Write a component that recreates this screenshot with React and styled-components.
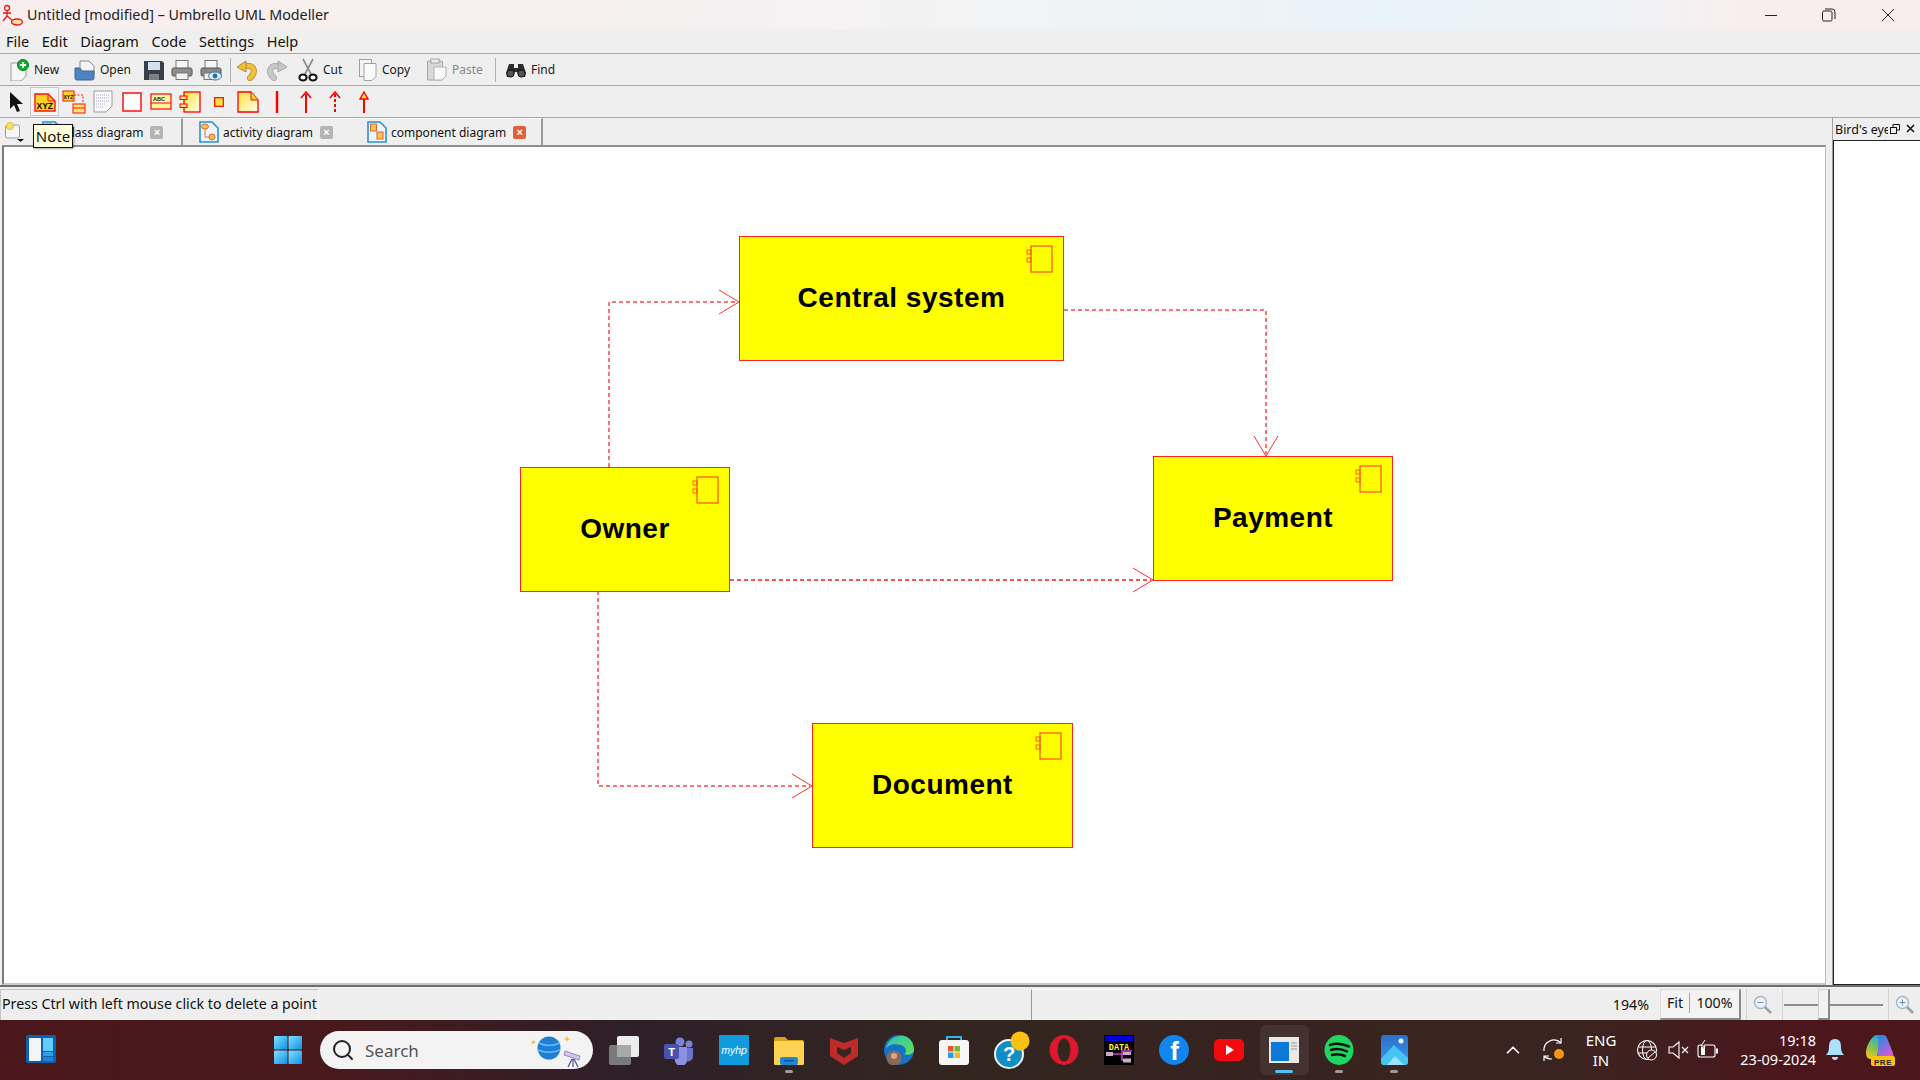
import React from "react";
import styled, { createGlobalStyle } from "styled-components";
import { Search, ChevronUp } from "lucide-react";

const Global = createGlobalStyle`
  html, body { margin: 0; padding: 0; width: 1920px; height: 1080px; overflow: hidden; }
  body { font-family: "Noto Sans", "Open Sans", sans-serif; color: #111; }
  * { box-sizing: border-box; }
`;

const Screen = styled.div`
  width: 1920px;
  height: 1080px;
  display: flex;
  flex-direction: column;
`;

const Win = styled.div`
  height: 1020px;
  display: flex;
  flex-direction: column;
  background: #efefef;
`;

const TitleBar = styled.div`
  height: 29px;
  display: flex;
  align-items: center;
  padding-left: 2px;
  background: linear-gradient(90deg, #f9eeee 0%, #f8f0f0 25%, #f3f3f4 50%, #e9f3fa 72%, #edf3f7 83%, #f9eeef 91%, #f9eeee 100%);
  font-size: 14.3px;
  color: #222;
`;

const TitleText = styled.span`
  margin-left: 3px;
  margin-top: -1px;
`;

const WinControls = styled.div`
  margin-left: auto;
  padding-right: 3px;
  display: flex;
`;

const WinButton = styled.div`
  width: 58.5px;
  height: 29px;
  display: flex;
  align-items: center;
  justify-content: center;
`;

const MenuBar = styled.div`
  height: 25px;
  display: flex;
  align-items: center;
  gap: 12.5px;
  padding-left: 6px;
  font-size: 14.5px;
  border-bottom: 1px solid #a8a8a8;
`;

const ToolRow = styled.div`
  height: 32px;
  display: flex;
  align-items: center;
  padding-left: ${(p) => p.$pad}px;
  border-bottom: 1px solid #a8a8a8;
`;

const ToolButton = styled.div`
  width: ${(p) => p.$w}px;
  display: flex;
  align-items: center;
  gap: ${(p) => p.$gap || 4}px;
  font-size: 12px;
  color: ${(p) => (p.$off ? "#8a8a8a" : "#1a1a1a")};
`;

const ToolSep = styled.div`
  width: ${(p) => p.$w}px;
  height: 24px;
  border-left: 1px solid #b0b0b0;
`;

const PaletteCell = styled.div`
  width: 29px;
  height: 29px;
  display: flex;
  align-items: center;
  justify-content: center;
  ${(p) => p.$on && "border: 1px solid #c9c9c9; background: #f4f4f4;"}
`;

const TabStrip = styled.div`
  position: relative;
  height: 27px;
  display: flex;
  align-items: center;
  padding-left: 5px;
  width: 1826px;
`;

const NewTab = styled.div`
  width: 25px;
  display: flex;
`;

const Tab = styled.div`
  width: ${(p) => p.$w}px;
  height: 27px;
  display: flex;
  align-items: center;
  padding-left: ${(p) => p.$pad}px;
  gap: 4px;
  font-size: 12px;
  border-right: ${(p) => (p.$line ? "2px solid #9a9a9a" : "none")};
  border-top: 1px solid #fbfbfb;
`;

const TabClose = styled.span`
  width: 13px;
  height: 13px;
  margin-left: 3px;
  border-radius: 2px;
  background: ${(p) => (p.$on ? "#e0603c" : "#b4b4b4")};
  color: #fff;
  font-size: 11px;
  line-height: 13px;
  font-weight: 700;
  text-align: center;
  font-family: "Liberation Sans", sans-serif;
`;

const Tooltip = styled.div`
  position: absolute;
  left: 33px;
  top: 6px;
  width: 40px;
  height: 24px;
  background: #ffffdc;
  border: 1px solid #111;
  box-shadow: 1px 1px 2px rgba(0, 0, 0, 0.35);
  font-size: 15px;
  line-height: 22px;
  text-align: center;
  z-index: 3;
`;

const Workspace = styled.div`
  flex: 1;
  display: flex;
  min-height: 0;
`;

const Canvas = styled.div`
  position: relative;
  margin-left: 2px;
  width: 1824px;
  background: #fff;
  border-top: 2px solid #8e8e8e;
  border-left: 2px solid #7a7a7a;
  border-right: 1px solid #c0c0c0;
  border-bottom: 2px solid #c8c8c8;
`;

const Wires = styled.svg`
  position: absolute;
  left: -4px;
  top: -147px;
  width: 1920px;
  height: 1080px;
  pointer-events: none;
`;

const Node = styled.div`
  position: absolute;
  left: ${(p) => p.$x - 4}px;
  top: ${(p) => p.$y - 147}px;
  width: ${(p) => p.$w}px;
  height: ${(p) => p.$h}px;
  padding-bottom: 2px;
  background: #ffff00;
  border: 1px solid #ff2222;
  display: flex;
  align-items: center;
  justify-content: center;
  font-family: "Liberation Sans", Arial, sans-serif;
  font-weight: 700;
  font-size: 28px;
  letter-spacing: 0.5px;
  color: #000;
`;

const NodeGlyph = styled.svg`
  position: absolute;
  right: 10px;
  top: 8px;
  width: 28px;
  height: 28px;
`;

const Dock = styled.div`
  margin-left: 6px;
  width: 88px;
  display: flex;
  flex-direction: column;
  border-left: 1px solid #a0a0a0;
  margin-top: -28px;
`;

const DockHead = styled.div`
  height: 23px;
  display: flex;
  align-items: center;
  padding-left: 2px;
  font-size: 12.5px;
  white-space: nowrap;
  overflow: hidden;
`;

const DockLabel = styled.span`
  width: 53px;
  margin-right: 1px;
  overflow: hidden;
  margin-top: 2px;
`;

const DockPane = styled.div`
  flex: 1;
  background: #fff;
  border: 1px solid #222;
  border-right: none;
`;

const StatusBar = styled.div`
  height: 35px;
  display: flex;
  padding-top: 2px;
  background: #eeeeee;
  border-top: 2px solid #6e6e6e;
  font-size: 14.2px;
`;

const StatusMsg = styled.div`
  width: 319px;
  height: 32px;
  padding-left: 1px;
  line-height: 28px;
  white-space: nowrap;
  border: 1px solid #c4c4c4;
  border-bottom-color: #fafafa;
  border-right-color: #fafafa;
`;

const StatusField = styled.div`
  margin-left: 712px;
  width: 629px;
  height: 32px;
  display: flex;
  align-items: center;
  justify-content: flex-end;
  padding-bottom: 2px;
  border-left: 1px solid #9a9a9a;
  border-top: 1px solid #fafafa;
  padding-right: 11px;
`;

const ZoomButtons = styled.div`
  width: 81px;
  height: 31px;
  padding-bottom: 2px;
  display: flex;
  align-items: center;
  background: #f3f3f3;
  border: 1px solid #d8d8d8;
  border-bottom: 2px solid #8a8a8a;
  border-right: 2px solid #8a8a8a;
`;

const ZoomPart = styled.span`
  width: ${(p) => p.$w}px;
  text-align: center;
  border-right: ${(p) => (p.$line ? "1px solid #a8a8a8" : "none")};
  line-height: 20px;
`;

const ZoomSide = styled.div`
  width: ${(p) => p.$w}px;
  height: 31px;
  margin-left: ${(p) => p.$ml}px;
  display: flex;
  align-items: center;
  justify-content: center;
  border-left: 1px solid #d4d4d4;
`;

const Slider = styled.div`
  position: relative;
  width: 102px;
  height: 31px;
  margin-left: 4px;
  display: flex;
  align-items: center;
  border-left: 1px solid #d4d4d4;
  padding: 0 1px;
`;

const SliderTrack = styled.div`
  width: 100%;
  height: 2px;
  background: #8c8c8c;
`;

const SliderKnob = styled.div`
  position: absolute;
  left: 35px;
  top: 0;
  width: 12px;
  height: 31px;
  background: #f2f2f2;
  border: 1px solid #d0d0d0;
  border-bottom: 2px solid #8a8a8a;
  border-right: 2px solid #8a8a8a;
`;

const Taskbar = styled.div`
  height: 60px;
  display: flex;
  align-items: center;
  padding-left: 26px;
  background: linear-gradient(90deg, #4b171b 0%, #47191d 18%, #2e2029 33%, #33261f 50%, #36231f 64%, #3a2420 75%, #3b2420 82%, #4b171d 93%, #4b171d 100%);
  color: #fff;
`;

const Widgets = styled.svg`
  width: 30px;
  height: 30px;
  margin-right: 204px;
`;

const TaskCell = styled.div`
  position: relative;
  width: 55px;
  height: 50px;
  flex: none;
  display: flex;
  align-items: center;
  justify-content: center;
  ${(p) => p.$on && "background: rgba(255,255,255,0.07); border-radius: 6px; width: 49px; margin: 0 3px;"}
`;

const RunDot = styled.span`
  position: absolute;
  bottom: 2px;
  left: 50%;
  margin-left: ${(p) => (p.$on ? -9 : -4)}px;
  width: ${(p) => (p.$on ? 18 : 8)}px;
  height: 3px;
  border-radius: 2px;
  background: ${(p) => (p.$on ? "#4fc3f7" : "#9c9c9c")};
`;

const SearchPill = styled.div`
  width: 273px;
  height: 38px;
  flex: none;
  margin: 0 3.5px 0 5px;
  padding: 0 8px 0 11px;
  border-radius: 19px;
  background: #f4f3f3;
  display: flex;
  align-items: center;
  color: #555;
  font-size: 17px;
`;

const SearchWord = styled.span`
  margin-left: 10px;
  flex: 1;
`;

const Tray = styled.div`
  margin-left: auto;
  display: flex;
  align-items: center;
  padding-right: 25px;
`;

const TrayItem = styled.div`
  width: ${(p) => p.$w}px;
  margin-left: ${(p) => p.$ml}px;
  display: flex;
  align-items: center;
  justify-content: center;
`;

const Lang = styled.div`
  width: 40px;
  margin-left: 14px;
  font-size: 15px;
  line-height: 20px;
  text-align: center;
`;

const Clock = styled.div`
  width: 90px;
  margin-left: 7px;
  font-size: 14.5px;
  line-height: 19px;
  text-align: right;
`;

/* ---------- toolbar drawings ---------- */

const Ico = ({ w = 22, h = 22, children }) => (
  <svg width={w} height={h} viewBox={`0 0 ${w} ${h}`}>{children}</svg>
);

const Page = ({ x = 3, y = 3, w = 15, h = 18 }) => (
  <path d={`M${x} ${y}h${w}v${h - 5}l-5 5h-${w - 5}z`} fill="#f7f7f7" stroke="#9a9a9a" />
);

const NewIcon = () => (
  <Ico>
    <Page y={4} />
    <circle cx="15" cy="6" r="5.5" fill="#0fae2c" stroke="#0a7a1c" />
    <path d="M15 3v6M12 6h6" stroke="#fff" strokeWidth="1.8" />
  </Ico>
);

const OpenIcon = () => (
  <Ico>
    <path d="M6 2h9l5 5v8H6z" fill="#f4f4f4" stroke="#8b8b8b" />
    <path d="M1 9h5l2 3h12v7a2 2 0 0 1-2 2H3a2 2 0 0 1-2-2z" fill="#4f84c4" stroke="#3b679e" />
  </Ico>
);

const SaveIcon = () => (
  <Ico>
    <path d="M1 2h18l2 2v17H1z" fill="#3a3f46" />
    <rect x="5" y="3" width="12" height="8" fill="#cfe0ee" />
    <rect x="6" y="15" width="10" height="6" fill="#7b8087" />
  </Ico>
);

const PrintIcon = () => (
  <Ico>
    <rect x="5" y="1.5" width="12" height="8" fill="#f6f6f6" stroke="#777" />
    <rect x="1" y="9" width="20" height="8" rx="1.5" fill="#8f8f8f" stroke="#555" />
    <rect x="5" y="14" width="12" height="6.5" fill="#f2f2f2" stroke="#777" />
  </Ico>
);

const PreviewIcon = () => (
  <Ico>
    <rect x="5" y="1.5" width="12" height="8" fill="#f6f6f6" stroke="#777" />
    <rect x="1" y="9" width="20" height="8" rx="1.5" fill="#888" stroke="#555" />
    <rect x="4" y="14" width="11" height="6.5" fill="#ececec" stroke="#777" />
    <ellipse cx="15" cy="17" rx="6.5" ry="4" fill="#dff0fa" stroke="#3f78a8" />
    <circle cx="15" cy="17" r="2.4" fill="#2a6da8" />
  </Ico>
);

const TurnIcon = ({ c, d, flip }) => (
  <Ico>
    <g transform={flip ? "translate(22 0) scale(-1 1)" : undefined}>
      <path d="M14 19C20 14 19 6 11 7" fill="none" stroke={d} strokeWidth="6" strokeLinecap="round" />
      <path d="M14 19C20 14 19 6 11 7" fill="none" stroke={c} strokeWidth="4.4" strokeLinecap="round" />
      <path d="M1 8l9-6v11z" fill={c} stroke={d} strokeLinejoin="round" />
    </g>
  </Ico>
);

const CutIcon = () => (
  <Ico w={20} h={24}>
    <path d="M5 1l8 15M15 1L7 16" stroke="#8b8b8b" strokeWidth="1.6" />
    <ellipse cx="5" cy="19.5" rx="3.6" ry="3" fill="#fff" stroke="#111" strokeWidth="2" />
    <ellipse cx="15" cy="19.5" rx="3.6" ry="3" fill="#fff" stroke="#111" strokeWidth="2" />
  </Ico>
);

const CopyIcon = () => (
  <Ico w={20} h={24}>
    <rect x="1.5" y="1.5" width="12" height="17" fill="#f4f4f4" stroke="#a0a0a0" />
    <path d="M6 5.5h12v13l-4 4H6z" fill="#fbfbfb" stroke="#a0a0a0" />
  </Ico>
);

const PasteIcon = () => (
  <Ico h={24}>
    <rect x="1.5" y="3" width="15" height="19" rx="1" fill="#d8d8d8" stroke="#a4a4a4" />
    <rect x="5" y="1" width="8" height="4" fill="#eee" stroke="#a4a4a4" />
    <path d="M8 9h12v9l-4 4H8z" fill="#f9f9f9" stroke="#b0b0b0" />
  </Ico>
);

const FindIcon = () => (
  <Ico h={18}>
    <path d="M4 3h5v4h4V3h5l3 9-1 4h-6l-2-5h-2l-2 5H2l-1-4z" fill="#2b2b2b" />
    <circle cx="5.5" cy="12.5" r="3.6" fill="#555" stroke="#111" />
    <circle cx="16.5" cy="12.5" r="3.6" fill="#555" stroke="#111" />
  </Ico>
);

/* ---------- palette drawings ---------- */

const NoteFill = () => (
  <defs>
    <linearGradient id="nf" x1="0" y1="0" x2="1" y2="1">
      <stop offset="0" stopColor="#ffe23a" />
      <stop offset="1" stopColor="#fffff0" />
    </linearGradient>
  </defs>
);

const CursorIcon = () => (
  <Ico w={14} h={20}>
    <path d="M1 0v17l4-4 3 7 3-1-3-7h6z" fill="#111" />
  </Ico>
);

const NoteXyzIcon = () => (
  <Ico>
    <path d="M1 3h13l7 7v10H1z" fill="#ffd21f" stroke="#ff1010" strokeWidth="1.4" />
    <path d="M14 3v7h7" fill="none" stroke="#ff1010" />
    <text x="2.5" y="18" fontFamily="Liberation Sans" fontWeight="700" fontSize="8.5" fill="#000">XYZ</text>
  </Ico>
);

const AssocIcon = () => (
  <Ico w={24} h={24}>
    <rect x="1" y="1" width="11" height="10" fill="#ffd21f" stroke="#f11" />
    <text x="1.5" y="9" fontFamily="Liberation Sans" fontWeight="700" fontSize="5" fill="#000">XYZ</text>
    <path d="M12 5h9v8" fill="none" stroke="#f11" strokeDasharray="2 1.5" />
    <rect x="11" y="14" width="12" height="9" fill="#ffe46a" stroke="#f11" />
    <path d="M11 18h12" stroke="#f11" />
  </Ico>
);

const TextDocIcon = () => (
  <Ico w={20} h={23}>
    <path d="M1 1h18v15l-6 6H1z" fill="#fafafa" stroke="#9a9a9a" />
    <path d="M3 5h13M3 8h13M3 11h13M3 14h10M3 17h8" stroke="#a0a4c0" strokeDasharray="1 1" />
  </Ico>
);

const BoxIcon = () => (
  <Ico w={20} h={20}>
    <rect x="1" y="1" width="18" height="18" fill="#fff" stroke="#f00" strokeWidth="1.4" />
  </Ico>
);

const EntityIcon = () => (
  <Ico w={22} h={17}>
    <rect x="1" y="1" width="20" height="15" fill="#fff6a0" stroke="#f00" strokeWidth="1.2" />
    <path d="M1 10h20" stroke="#f00" />
    <text x="3" y="8" fontFamily="Liberation Sans" fontWeight="700" fontSize="5.5" fill="#222">ABC</text>
  </Ico>
);

const ComponentIcon = () => (
  <Ico>
    <NoteFill />
    <rect x="5" y="1" width="16" height="20" fill="url(#nf)" stroke="#f00" strokeWidth="1.3" />
    <rect x="1" y="5" width="7" height="3.5" fill="#ffe97a" stroke="#f00" />
    <rect x="1" y="13" width="7" height="3.5" fill="#ffe97a" stroke="#f00" />
  </Ico>
);

const DotBoxIcon = () => (
  <Ico w={10} h={10}>
    <rect x="0.7" y="0.7" width="8.6" height="8.6" fill="#ffe23a" stroke="#f00" strokeWidth="1.2" />
  </Ico>
);

const NoteIcon = () => (
  <Ico>
    <NoteFill />
    <path d="M1 1h13l7 8v12H1z" fill="url(#nf)" stroke="#f00" strokeWidth="1.3" />
    <path d="M14 1v8h7" fill="#ffd21f" stroke="#f00" />
  </Ico>
);

const LineIcon = () => (
  <Ico w={4} h={22}><path d="M2 0v22" stroke="#f00" strokeWidth="2.4" /></Ico>
);

const ArrowUpIcon = ({ kind }) => (
  <Ico w={12} h={22}>
    <path d="M6 3v19" stroke="#f00" strokeWidth="2" strokeDasharray={kind === "dash" ? "3 2" : undefined} />
    {kind === "hollow" ? (
      <path d="M6 1l4 7H2z" fill="#ffe23a" stroke="#f00" strokeWidth="1.4" />
    ) : (
      <path d="M1 7l5-6 5 6" fill="none" stroke="#f00" strokeWidth="1.6" />
    )}
  </Ico>
);

const TabIcon = ({ kind }) => (
  <Ico w={20} h={22}>
    <path d="M1 1h12l6 6v14H1z" fill="#eef6fc" stroke="#2b8fd6" strokeWidth="1.6" />
    {kind === "activity" ? (
      <g>
        <ellipse cx="6" cy="5.5" rx="3.5" ry="2.5" fill="#f5c25a" stroke="#d86a2a" />
        <path d="M6 8v8h5" fill="none" stroke="#e0703a" />
        <circle cx="13" cy="16" r="3" fill="#f5c25a" stroke="#d86a2a" />
      </g>
    ) : (
      <g fill="#f6c15a" stroke="#d86a2a">
        <rect x="3.5" y="3" width="6" height="7" />
        <rect x="10" y="11" width="6" height="7" />
      </g>
    )}
  </Ico>
);

const NewTabIcon = () => (
  <Ico w={20} h={22}>
    <rect x="0.5" y="4" width="14" height="13" rx="2" fill="#f6f6f6" stroke="#9a9a9a" />
    <circle cx="5" cy="5" r="3.6" fill="#f2df6a" stroke="#e0c040" />
    <path d="M12 18h7l-3.5 3z" fill="#111" />
  </Ico>
);

const MagIcon = ({ plus }) => (
  <Ico w={20} h={20}>
    <circle cx="7.5" cy="7.5" r="6" fill="#eaf2fa" stroke="#a4b6c8" strokeWidth="1.4" />
    <path d="M4.5 7.5h6" stroke="#7890a8" />
    {plus && <path d="M7.5 4.5v6" stroke="#7890a8" />}
    <path d="M12 12l6 6" stroke="#a0a0a0" strokeWidth="2.6" />
  </Ico>
);

const ComponentGlyph = () => (
  <NodeGlyph viewBox="0 0 28 28">
    <rect x="6" y="1" width="21" height="26" fill="none" stroke="#ff5a1e" strokeWidth="1.3" />
    <rect x="2" y="5" width="4" height="4" fill="none" stroke="#ff5a1e" />
    <rect x="2" y="13" width="4" height="4" fill="none" stroke="#ff5a1e" />
  </NodeGlyph>
);

/* ---------- taskbar drawings ---------- */

const WinLogo = () => (
  <Ico w={30} h={30}>
    <defs>
      <linearGradient id="wl" x1="0" y1="0" x2="1" y2="1">
        <stop offset="0" stopColor="#7fe3ff" />
        <stop offset="1" stopColor="#0f8fe8" />
      </linearGradient>
    </defs>
    <rect x="1" y="1" width="13.5" height="13.5" rx="1" fill="url(#wl)" />
    <rect x="15.5" y="1" width="13.5" height="13.5" rx="1" fill="url(#wl)" />
    <rect x="1" y="15.5" width="13.5" height="13.5" rx="1" fill="url(#wl)" />
    <rect x="15.5" y="15.5" width="13.5" height="13.5" rx="1" fill="url(#wl)" />
  </Ico>
);

const SearchArt = () => (
  <Ico w={54} h={34}>
    <circle cx="18" cy="15" r="11.5" fill="#1f7fd6" />
    <path d="M8 10c6 3 14 3 21 0M7 17c7 3 15 3 22 0" stroke="#6db9f2" strokeWidth="1.5" fill="none" />
    <path d="M2 6l1 2 2 1-2 1-1 2-1-2-1-1 2-1zM36 3l1 2 2 1-2 1-1 2-1-2-2-1 2-1z" fill="#f2c230" />
    <path d="M34 18l15 5-1 4-15-5z" fill="#cfc6e8" stroke="#6d5aa8" strokeWidth="0.6" />
    <path d="M41 26l-4 8M42 26v8M43 26l4 8" stroke="#5a4896" strokeWidth="1.2" />
  </Ico>
);

const TaskView = () => (
  <Ico w={30} h={30}>
    <rect x="0" y="10" width="22" height="20" rx="2" fill="#7a7a7a" />
    <rect x="8" y="1" width="22" height="21" rx="2" fill="#ececec" />
    <rect x="8" y="10" width="14" height="12" fill="#a8a8a8" />
  </Ico>
);

const Teams = () => (
  <Ico w={30} h={30}>
    <circle cx="25" cy="9" r="3.5" fill="#7b83d8" />
    <circle cx="16" cy="7" r="4.5" fill="#7b83d8" />
    <path d="M19 13h10v9a5 5 0 0 1-7 4z" fill="#6b74c8" />
    <path d="M8 12h15v12a6 6 0 0 1-12 2z" fill="#8a92e0" />
    <rect x="0" y="9" width="15" height="15" rx="2" fill="#4a51b0" />
    <text x="7.5" y="21" textAnchor="middle" fontFamily="Liberation Sans" fontWeight="700" fontSize="11" fill="#fff">T</text>
  </Ico>
);

const MyHp = () => (
  <Ico w={30} h={30}>
    <rect width="30" height="30" rx="1" fill="#0f9bdc" />
    <text x="15" y="19" textAnchor="middle" fontFamily="Liberation Sans" fontStyle="italic" fontSize="10.5" fill="#fff">myhp</text>
  </Ico>
);

const FolderApp = () => (
  <Ico w={30} h={30}>
    <path d="M0 4a2 2 0 0 1 2-2h9l3 3h14a2 2 0 0 1 2 2v4H0z" fill="#dca016" />
    <rect y="6" width="30" height="24" rx="1.5" fill="#fcd353" />
    <rect x="6" y="22" width="18" height="8" rx="2" fill="#1f87d8" />
    <rect x="10" y="25" width="10" height="1.4" fill="#0b4f8f" />
  </Ico>
);

const McAfee = () => (
  <Ico w={28} h={30}>
    <path d="M0 3l14 5 14-5v18l-14 9-14-9z" fill="#bf2a2a" />
    <path d="M7 12l7 3 7-3v6l-7 5-7-5z" fill="#33261f" />
  </Ico>
);

const Edge = () => (
  <Ico w={30} h={30}>
    <defs>
      <linearGradient id="ed" x1="0" y1="0" x2="1" y2="1">
        <stop offset="0" stopColor="#35c1b0" />
        <stop offset="1" stopColor="#5fe05a" />
      </linearGradient>
    </defs>
    <circle cx="15" cy="15" r="15" fill="#1473c8" />
    <path d="M2 14C4 3 14 0 20 1c6 1 10 7 10 14 0 4-6 6-10 4 3-1 3-7-3-9C10 8 4 10 2 14z" fill="url(#ed)" />
    <circle cx="10" cy="23" r="7.5" fill="#8a6a58" />
    <circle cx="10" cy="21" r="3" fill="#d8a888" />
  </Ico>
);

const Store = () => (
  <Ico w={30} h={30}>
    <path d="M8 6V2h14v4" fill="none" stroke="#2eb3ea" strokeWidth="2" />
    <rect y="5" width="30" height="25" rx="3" fill="#f6f6f6" />
    <rect x="9" y="11" width="5.5" height="5.5" fill="#e8552d" />
    <rect x="15.5" y="11" width="5.5" height="5.5" fill="#7cb92e" />
    <rect x="9" y="17.5" width="5.5" height="5.5" fill="#1fa3e8" />
    <rect x="15.5" y="17.5" width="5.5" height="5.5" fill="#f6b91c" />
  </Ico>
);

const Help = () => (
  <Ico w={44} h={38}>
    <circle cx="22" cy="23" r="14" fill="#0f8fc8" stroke="#f4f4f4" strokeWidth="2" />
    <text x="22" y="30" textAnchor="middle" fontFamily="Liberation Sans" fontWeight="700" fontSize="20" fill="#fff">?</text>
    <circle cx="33" cy="10" r="9.5" fill="#fcc30e" />
  </Ico>
);

const Opera = () => (
  <Ico w={30} h={30}>
    <ellipse cx="15" cy="15" rx="14.5" ry="15" fill="#e0182d" />
    <ellipse cx="15" cy="15" rx="6.5" ry="11.5" fill="#33261f" />
  </Ico>
);

const DataApp = () => (
  <Ico w={30} h={30}>
    <rect width="30" height="30" fill="#000" />
    <rect x="1" y="1" width="28" height="5" fill="#0000d8" />
    <text x="15" y="15" textAnchor="middle" fontFamily="Liberation Mono" fontWeight="700" fontSize="8.5" fill="#ffff30">DATA</text>
    <path d="M2 19h8M10 19h8v-3h9v-1M18 19v6h3" stroke="#d040d0" strokeWidth="1.6" fill="none" />
    <rect x="2" y="17" width="7" height="4" fill="#c8b0c8" />
    <rect x="19" y="17" width="8" height="3" fill="#c8b0c8" />
    <rect x="19" y="23.5" width="8" height="4" fill="#c8b0c8" />
  </Ico>
);

const Facebook = () => (
  <Ico w={30} h={30}>
    <ellipse cx="15" cy="15" rx="15" ry="15" fill="#1286ee" />
    <text x="15.5" y="25" textAnchor="middle" fontFamily="Liberation Sans" fontWeight="700" fontSize="26" fill="#fff">f</text>
  </Ico>
);

const YouTube = () => (
  <Ico w={30} h={30}>
    <rect y="4" width="30" height="22" rx="5" fill="#f40a0e" />
    <path d="M12 10l8 5-8 5z" fill="#fff" />
  </Ico>
);

const AppWindow = () => (
  <Ico w={30} h={30}>
    <rect y="2" width="30" height="26" fill="#e8e8e8" />
    <rect x="2" y="7" width="18" height="19" fill="#0c78d8" />
    <path d="M22 8h6M22 11h6M22 14h6" stroke="#999" />
  </Ico>
);

const Spotify = () => (
  <Ico w={30} h={30}>
    <ellipse cx="15" cy="15" rx="14.5" ry="15" fill="#1ed760" />
    <path d="M6 10c6-2 13-1 19 1.500M7 15c5-1.500 11-1 16 1.500M8 20c4-1 9-.8 13 1" stroke="#111" strokeWidth="2.5" strokeLinecap="round" fill="none" />
  </Ico>
);

const Photos = () => (
  <Ico w={27} h={30}>
    <defs>
      <linearGradient id="ph" x1="0" y1="0" x2="0" y2="1">
        <stop offset="0" stopColor="#2a72cc" />
        <stop offset="1" stopColor="#3a98e8" />
      </linearGradient>
    </defs>
    <rect width="27" height="30" rx="3" fill="url(#ph)" />
    <circle cx="20" cy="6" r="2.5" fill="#e8f4ff" />
    <path d="M0 24L13 10l14 13v4a3 3 0 0 1-3 3H3a3 3 0 0 1-3-3z" fill="#46c4f4" />
    <path d="M6 30l8-9 9 9z" fill="#9ae2fa" />
  </Ico>
);

const Sync = () => (
  <Ico w={26} h={26}>
    <path d="M3 14a10 10 0 0 1 17-8" fill="none" stroke="#fff" strokeWidth="1.2" />
    <path d="M20 1v5h-5M3 24v-5h5M3 19c2 2 5 3 8 3" fill="none" stroke="#fff" strokeWidth="1.2" />
    <circle cx="18" cy="17" r="5" fill="#f9960e" />
  </Ico>
);

const GlobeTray = () => (
  <Ico w={22} h={24}>
    <circle cx="11" cy="12" r="9.500" fill="none" stroke="#fff" strokeWidth="1.1" />
    <ellipse cx="11" cy="12" rx="4.500" ry="9.500" fill="none" stroke="#fff" />
    <path d="M2 9h18M2 15h18" stroke="#fff" />
    <circle cx="15.500" cy="17" r="5" fill="#47201f" stroke="#fff" />
    <path d="M12 20l7-6" stroke="#fff" />
  </Ico>
);

const Speaker = () => (
  <Ico>
    <path d="M2 8h4l6-5v16l-6-5H2z" fill="none" stroke="#fff" strokeWidth="1.1" />
    <path d="M15 8l6 6M21 8l-6 6" stroke="#fff" strokeWidth="1.1" />
  </Ico>
);

const Battery = () => (
  <Ico h={24}>
    <rect x="1" y="7" width="17" height="12" rx="2" fill="none" stroke="#fff" strokeWidth="1.1" />
    <rect x="19" y="10.500" width="2" height="5" fill="#fff" />
    <path d="M4 9h4v8H4z" fill="#fff" />
    <path d="M8 2L4 8h4l-2 5" fill="#47201f" stroke="#fff" />
  </Ico>
);

const Bell = () => (
  <Ico w={20} h={24}>
    <path d="M10 1c5 0 6 4 6 8 0 4 1 6 3 8H1c2-2 3-4 3-8 0-4 1-8 6-8z" fill="#a8e2fb" />
    <path d="M7 19a3 3 0 0 0 6 0z" fill="#a8e2fb" />
  </Ico>
);

const Copilot = () => (
  <Ico w={30} h={34}>
    <defs>
      <linearGradient id="cp" x1="0.7" y1="0" x2="0.3" y2="1">
        <stop offset="0" stopColor="#2aa4e8" />
        <stop offset="0.55" stopColor="#7cc44e" />
        <stop offset="1" stopColor="#f4c020" />
      </linearGradient>
      <linearGradient id="cq" x1="0.2" y1="0" x2="0.8" y2="1">
        <stop offset="0" stopColor="#1f8fe0" />
        <stop offset="0.6" stopColor="#9a6ae0" />
        <stop offset="1" stopColor="#e85ac0" />
      </linearGradient>
    </defs>
    <path d="M1 20C1 13 6 4 11 2h7c-3 4-5 16-6 24H6Q1 26 1 20z" fill="url(#cp)" />
    <path d="M11 2h7q3 0 4 3l6 15q2 6-4 6H12c1-8 3-20-1-24z" fill="url(#cq)" />
    <rect x="6" y="23" width="24" height="10" rx="2" fill="#fcc30e" />
    <text x="18" y="31.500" textAnchor="middle" fontFamily="Liberation Sans" fontWeight="700" fontSize="8" letterSpacing="0.5" fill="#222">PRE</text>
  </Ico>
);

/* ---------- data ---------- */

const menus = ["File", "Edit", "Diagram", "Code", "Settings", "Help"];

const nodes = [
  { name: "Central system", x: 739, y: 236, w: 325, h: 125 },
  { name: "Owner", x: 520, y: 467, w: 210, h: 125 },
  { name: "Payment", x: 1153, y: 456, w: 240, h: 125 },
  { name: "Document", x: 812, y: 723, w: 261, h: 125 },
];

const wires = [
  { d: "M609 467V302H738", head: "M719 290L739 302L719 314", soft: true },
  { d: "M1064 310H1266V454", head: "M1254 436L1266 456L1278 436", soft: true },
  { d: "M730 580H1151", head: "M1133 568L1153 580L1133 592" },
  { d: "M598 591V786H810", head: "M792 774L812 786L792 798", soft: true },
];

const palette = [
  <CursorIcon />, <NoteXyzIcon />, <AssocIcon />, <TextDocIcon />, <BoxIcon />, <EntityIcon />,
  <ComponentIcon />, <DotBoxIcon />, <NoteIcon />, <LineIcon />, <ArrowUpIcon />,
  <ArrowUpIcon kind="dash" />, <ArrowUpIcon kind="hollow" />,
];

const taskApps = [
  { icon: <TaskView /> }, { icon: <Teams /> }, { icon: <MyHp /> }, { icon: <FolderApp />, dot: true },
  { icon: <McAfee /> }, { icon: <Edge /> }, { icon: <Store /> }, { icon: <Help /> }, { icon: <Opera /> },
  { icon: <DataApp /> }, { icon: <Facebook /> }, { icon: <YouTube /> }, { icon: <AppWindow />, active: true },
  { icon: <Spotify />, dot: true }, { icon: <Photos />, dot: true },
];

export default function App() {
  return (
    <Screen>
      <Global />
      <Win>
        <TitleBar>
          <svg width="22" height="22" viewBox="0 0 22 22">
            <circle cx="5" cy="4" r="2.500" fill="none" stroke="#e01818" strokeWidth="1.3" />
            <path d="M5 7v5M1 9h8M5 12l-4 5M5 12l5 4" stroke="#e01818" strokeWidth="1.3" />
            <ellipse cx="15" cy="18" rx="5.500" ry="3" fill="#ffe0a0" stroke="#e01818" strokeWidth="1.3" />
          </svg>
          <TitleText>Untitled [modified] – Umbrello UML Modeller</TitleText>
          <WinControls>
            <WinButton>
              <svg width="14" height="14"><path d="M1 7.500h12" stroke="#222" /></svg>
            </WinButton>
            <WinButton>
              <svg width="14" height="14" fill="none" stroke="#222">
                <rect x="0.500" y="3" width="9.500" height="10" rx="1.500" />
                <path d="M3 1h7a3 3 0 0 1 3 3v7" />
              </svg>
            </WinButton>
            <WinButton>
              <svg width="14" height="14"><path d="M1 1l12 12M13 1L1 13" stroke="#222" /></svg>
            </WinButton>
          </WinControls>
        </TitleBar>

        <MenuBar>
          {menus.map((m) => <span key={m}>{m}</span>)}
        </MenuBar>

        <ToolRow $pad={8}>
          <ToolButton $w={66}><NewIcon />New</ToolButton>
          <ToolButton $w={69}><OpenIcon />Open</ToolButton>
          <ToolButton $w={28}><SaveIcon /></ToolButton>
          <ToolButton $w={29}><PrintIcon /></ToolButton>
          <ToolButton $w={30}><PreviewIcon /></ToolButton>
          <ToolSep $w={6} />
          <ToolButton $w={30}><TurnIcon c="#f0c040" d="#b88a1c" /></ToolButton>
          <ToolButton $w={32}><TurnIcon c="#c8c8c8" d="#a4a4a4" flip /></ToolButton>
          <ToolButton $w={60} $gap={5}><CutIcon />Cut</ToolButton>
          <ToolButton $w={68}><CopyIcon />Copy</ToolButton>
          <ToolButton $w={69} $off><PasteIcon />Paste</ToolButton>
          <ToolSep $w={10} />
          <ToolButton $w={60}><FindIcon />Find</ToolButton>
        </ToolRow>

        <ToolRow $pad={1}>
          {palette.map((icon, i) => (
            <PaletteCell key={i} $on={i === 1}>{icon}</PaletteCell>
          ))}
        </ToolRow>

        <TabStrip>
          <NewTab><NewTabIcon /></NewTab>
          <Tab $w={153} $pad={12} $line><TabIcon kind="component" />class diagram<TabClose>×</TabClose></Tab>
          <Tab $w={169} $pad={16}><TabIcon kind="activity" />activity diagram<TabClose>×</TabClose></Tab>
          <Tab $w={191} $pad={15} $line><TabIcon kind="component" />component diagram<TabClose $on>×</TabClose></Tab>
          <Tooltip>Note</Tooltip>
        </TabStrip>

        <Workspace>
          <Canvas>
            <Wires viewBox="0 0 1920 1080">
              {wires.map((w) => (
                <g key={w.d} fill="none">
                  <path d={w.d} stroke={w.soft ? "#ff7272" : "#ff1a1a"} strokeWidth={w.soft ? 2 : 1.4} strokeDasharray="4 3" />
                  <path d={w.head} stroke="#ff3030" strokeWidth="1" />
                </g>
              ))}
            </Wires>
            {nodes.map((n) => (
              <Node key={n.name} $x={n.x} $y={n.y} $w={n.w} $h={n.h}>
                {n.name}
                <ComponentGlyph />
              </Node>
            ))}
          </Canvas>
          <Dock>
            <DockHead>
              <DockLabel>Bird's eye</DockLabel>
              <svg width="14" height="12" viewBox="0 0 14 12" fill="none" stroke="#111">
                <rect x="1.500" y="4.500" width="6" height="6" />
                <path d="M4 4V1.500h6.500V7H8" />
              </svg>
              <svg width="14" height="12" viewBox="0 0 14 12"><path d="M4 2l7 7M11 2L4 9" stroke="#111" strokeWidth="1.500" /></svg>
            </DockHead>
            <DockPane />
          </Dock>
        </Workspace>

        <StatusBar>
          <StatusMsg>Press Ctrl with left mouse click to delete a point</StatusMsg>
          <StatusField>
            <span>194%</span>
          </StatusField>
          <ZoomButtons>
            <ZoomPart $w={30} $line>Fit</ZoomPart>
            <ZoomPart $w={51}>100%</ZoomPart>
          </ZoomButtons>
          <ZoomSide $w={32} $ml={5}><MagIcon /></ZoomSide>
          <Slider>
            <SliderTrack />
            <SliderKnob />
          </Slider>
          <ZoomSide $w={32} $ml={4}><MagIcon plus /></ZoomSide>
        </StatusBar>
      </Win>

      <Taskbar>
        <Widgets viewBox="0 0 30 30">
          <rect width="30" height="28" rx="2" fill="#0f5fb0" />
          <rect x="3" y="3" width="12" height="23" rx="1" fill="#f2f6fa" />
          <rect x="17" y="3" width="10" height="13" fill="#62cdfb" />
          <rect x="17" y="17" width="10" height="4" fill="#2aa0e8" />
          <rect x="17" y="22" width="10" height="4" fill="#1c86d8" />
        </Widgets>
        <TaskCell><WinLogo /></TaskCell>
        <SearchPill>
          <Search size={24} color="#222" strokeWidth={2} />
          <SearchWord>Search</SearchWord>
          <SearchArt />
        </SearchPill>
        {taskApps.map((a, i) => (
          <TaskCell key={i} $on={a.active}>
            {a.icon}
            {a.dot && <RunDot />}
            {a.active && <RunDot $on />}
          </TaskCell>
        ))}
        <Tray>
          <TrayItem $w={24} $ml={0}><ChevronUp size={22} color="#fff" strokeWidth={1.8} /></TrayItem>
          <TrayItem $w={26} $ml={16}><Sync /></TrayItem>
          <Lang>ENG<br />IN</Lang>
          <TrayItem $w={24} $ml={14}><GlobeTray /></TrayItem>
          <TrayItem $w={22} $ml={8}><Speaker /></TrayItem>
          <TrayItem $w={22} $ml={8}><Battery /></TrayItem>
          <Clock>19:18<br />23-09-2024</Clock>
          <TrayItem $w={24} $ml={7}><Bell /></TrayItem>
          <TrayItem $w={30} $ml={18}><Copilot /></TrayItem>
        </Tray>
      </Taskbar>
    </Screen>
  );
}
